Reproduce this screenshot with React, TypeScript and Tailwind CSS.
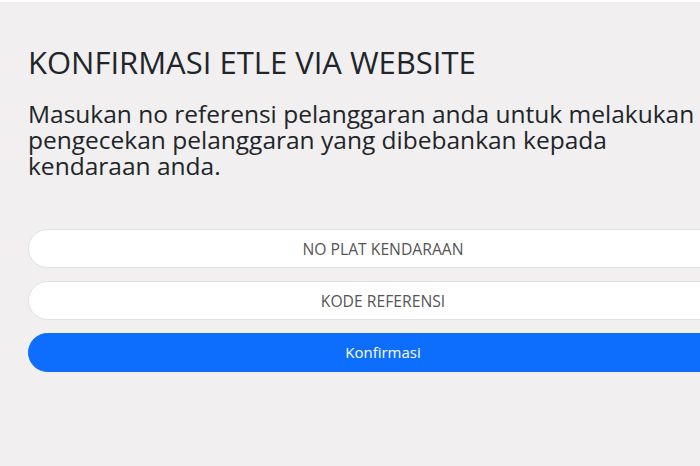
export default function App() {
  return (
    <div className="h-[466px] w-[700px] overflow-hidden bg-white pt-[2px] font-['Open_Sans',sans-serif] text-[#212529]">
      <div className="h-full w-[800px] bg-[#f1eff0] pl-[28px] pt-[41px]">
        <div className="w-[710px]">
          <h1 className="text-[31px] leading-[38px] font-normal">KONFIRMASI ETLE VIA WEBSITE</h1>
          <p className="mt-[20px] text-[24.5px] leading-[26px]">
            <span className="block">Masukan no referensi pelanggaran anda untuk melakukan</span>
            <span className="block">pengecekan pelanggaran yang dibebankan kepada</span>
            <span className="block">kendaraan anda.</span>
          </p>
          <form className="mt-[50px] flex flex-col gap-[13px]">
            <input
              type="text"
              placeholder="NO PLAT KENDARAAN"
              className="h-[39px] w-full rounded-full border border-[#dee2e6] bg-white px-3 text-center text-[15.7px] placeholder:text-[#555]"
            />
            <input
              type="text"
              placeholder="KODE REFERENSI"
              className="h-[39px] w-full rounded-full border border-[#dee2e6] bg-white px-3 text-center text-[15.7px] placeholder:text-[#555]"
            />
            <button
              type="button"
              className="h-[39px] w-full rounded-full border border-[#0d6efd] bg-[#0d6efd] text-[15px] text-white"
            >
              Konfirmasi
            </button>
          </form>
        </div>
      </div>
    </div>
  );
}
